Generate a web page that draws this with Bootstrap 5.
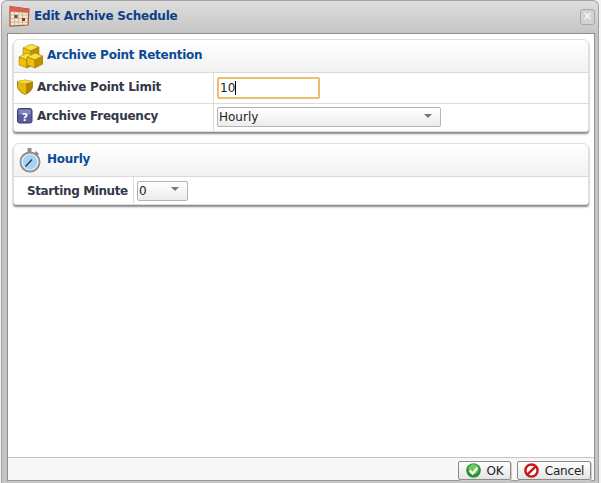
<!DOCTYPE html>
<html lang="en">
<head>
<meta charset="UTF-8">
<title>Edit Archive Schedule</title>
<link rel="stylesheet" href="https://cdn.jsdelivr.net/npm/bootstrap@5.3.0/dist/css/bootstrap.min.css">
<style>
html, body { height: 100%; }
body { background: #f4f4f4; font-family: "DejaVu Sans", Verdana, sans-serif; font-size: 12px; overflow: hidden; }
.dlg { width: 598px; height: 483px; margin-left: 1px; background: linear-gradient(#dedede, #c4c4c4 33px, #c4c4c4); border: 1px solid #a4a4a4; border-bottom: 0; border-radius: 6px 6px 0 0; padding: 0 3px 0 5px; }
.dlg-title { height: 32px; padding-bottom: 1px; gap: 3px; }
.dlg-title span { color: #0b3f86; font-weight: 700; font-size: 12px; letter-spacing: -.2px; padding-bottom: 2px; }
.dlg-title svg { margin-left: 1px; }
.dlg-close { width: 15px; height: 16px; border: 1px solid #a8a8a8; border-radius: 3px; background: #d2d2d2; color: #fff; font-size: 12px; line-height: 13px; text-align: center; }
.dlg-body { height: 448px; width: 588px; background: #fff; border: 1px solid #8e8e8e; border-bottom-color: #9a9a9a; }
.dlg-main { padding: 5px 5px 0 5px; }
.pane { border: 1px solid #dedede; border-radius: 6px 6px 3px 3px; box-shadow: 0 2px 2px 0 #888; margin-bottom: 11px; background: #fff; }
.pane-head { height: 33px; background: linear-gradient(#fff, #f1f1f1); border-bottom: 1px solid #d8d8d8; border-radius: 6px 6px 0 0; padding-left: 4px; color: #0b4a94; font-weight: 700; font-size: 12px; letter-spacing: -.25px; }
.pane-head span { padding-bottom: 3px; }
.pane-row { display: flex; border-bottom: 1px solid #dcdcdc; }
.pane-row:last-child { border-bottom: 0; }
.pane-lab { display: flex; align-items: center; gap: 4px; padding-left: 3px; border-right: 1px solid #dcdcdc; color: #333848; font-weight: 700; font-size: 12px; letter-spacing: -.25px; }
.pane-val { display: flex; align-items: center; padding-left: 3px; }
.row-a { height: 31px; }
.row-a .pane-lab span { padding-bottom: 2px; }
.row-a .pane-lab svg { margin-bottom: 2px; }
.row-b { height: 27px; }
.row-b .pane-lab span { padding-bottom: 3px; }
.row-b .pane-lab svg { margin-bottom: 3px; }
.row-b .pane-val { padding-bottom: 1px; }
.row-c { height: 27px; }
.w-lab1 { width: 200px; }
.w-lab2 { width: 120px; padding-left: 13px; letter-spacing: -.38px; }
.txt-in { width: 103px; height: 22px; border: 2px solid #eebd6c; border-radius: 2px; font-size: 12px; padding-left: 1px; line-height: 18px; color: #222; }
.caret-bar { display: inline-block; width: 1px; height: 14px; background: #000; vertical-align: -3px; }
.sel-in { height: 20px; border: 1px solid #b4b4b4; border-radius: 2px; background: linear-gradient(#fff, #ececec); font-size: 12px; padding: 0 8px 0 1px; color: #222; display: flex; align-items: center; justify-content: space-between; }
.sel-in i { width: 0; height: 0; border: 4px solid transparent; border-top: 4px solid #777; border-bottom: 0; margin-top: -3px; }
.dlg-foot { height: 23px; background: #f7f7f7; border-top: 1px solid #c4c4c4; padding-right: 3px; gap: 6px; }
.dlg-btn { height: 19px; border: 1px solid #8a8a8a; border-radius: 2px; background: linear-gradient(#fff, #e4e4e4); box-shadow: 1px 1px 0 #ccc; font-size: 12px; color: #222; gap: 6px; padding: 0; letter-spacing: -.2px; }
</style>
</head>
<body>
<div class="dlg d-flex flex-column">
  <div class="dlg-title d-flex align-items-center">
    <svg width="23" height="23" viewBox="0 0 23 23">
      <path d="M2 1.500 21 4l-1 16-18 1Z" fill="#efe9cf" stroke="#c2483a" stroke-width="1.200"/>
      <path d="M2 1.500 21 4l-.3 4L2 6.500Z" fill="#d9604e"/>
      <path d="M3 10h17M3 13.500h17M3 17h17M6.500 7v13M10.500 7v13M14.500 7v13" stroke="#aebba0" stroke-width=".8"/>
      <rect x="6.500" y="10" width="3" height="3" fill="#a82a22"/><rect x="14" y="13" width="3" height="3" fill="#a82a22"/>
    </svg>
    <span>Edit Archive Schedule</span>
    <div class="dlg-close ms-auto">×</div>
  </div>
  <div class="dlg-body d-flex flex-column">
    <div class="dlg-main flex-grow-1">
      <div class="pane">
        <div class="pane-head d-flex align-items-center gap-1">
          <svg width="25" height="25" viewBox="0 0 25 25">
            <defs>
              <g id="cube" stroke="#8f7000" stroke-width=".5">
                <path d="M5 4l8-4 8 3-8 4Z" fill="#f9df45"/>
                <path d="M5 4l8 3v8l-8-3Z" fill="#f1bf08"/>
                <path d="M13 7l8-4v8l-8 4Z" fill="#c09200"/>
              </g>
            </defs>
            <use href="#cube" x="0" y="0"/>
            <use href="#cube" x="-4" y="9"/>
            <use href="#cube" x="4" y="9"/>
          </svg>
          <span>Archive Point Retention</span>
        </div>
        <div class="pane-row row-a">
          <div class="pane-lab w-lab1">
            <svg width="16" height="16" viewBox="0 0 16 16"><path d="M.5 2.500Q8-.5 15.500 2.500V8q-1 5-7.500 7.500Q1.500 13 .5 8Z" fill="#e6b80e" stroke="#8a6a00" stroke-width=".7"/><path d="M1 2.500Q8 0 15 2.500 8 5 1 2.500Z" fill="#f9df45"/><path d="M9 4.500V15q5.500-2.500 6.300-7V3Z" fill="#b28600"/></svg>
            <span>Archive Point Limit</span>
          </div>
          <div class="pane-val"><div class="txt-in">10<span class="caret-bar"></span></div></div>
        </div>
        <div class="pane-row row-b">
          <div class="pane-lab w-lab1">
            <svg width="16" height="16" viewBox="0 0 16 16"><rect x=".5" y=".5" width="14.500" height="14.500" rx="2" fill="#5a5a9c" stroke="#3c3c74"/><rect x="1.500" y="1.500" width="12.500" height="5" rx="1" fill="#8484bc"/><text x="7.800" y="12.500" text-anchor="middle" font-size="11" font-weight="700" fill="#fff" font-family="DejaVu Sans">?</text></svg>
            <span>Archive Frequency</span>
          </div>
          <div class="pane-val"><div class="sel-in" style="width:224px">Hourly<i></i></div></div>
        </div>
      </div>
      <div class="pane">
        <div class="pane-head d-flex align-items-center gap-1">
          <svg width="25" height="26" viewBox="0 0 25 26">
            <path d="M9.500 1h4v4h-4Z" fill="#8c8c8c"/><path d="M18 4l3 3-2 1.500-2.500-2.500Z" fill="#8c8c8c"/>
            <circle cx="12" cy="15" r="10.500" fill="#8f8f8f"/>
            <circle cx="12" cy="15" r="8" fill="#a6d2f4" stroke="#eef6fb" stroke-width="1.200"/>
            <path d="M7.500 19.500 14 12.500" stroke="#2c3440" stroke-width="1.300"/>
          </svg>
          <span>Hourly</span>
        </div>
        <div class="pane-row row-c">
          <div class="pane-lab w-lab2"><span>Starting Minute</span></div>
          <div class="pane-val"><div class="sel-in" style="width:51px">0<i></i></div></div>
        </div>
      </div>
    </div>
    <div class="dlg-foot d-flex justify-content-end align-items-end">
      <button type="button" class="dlg-btn d-flex align-items-center justify-content-center" style="width:53px">
        <svg width="15" height="15" viewBox="0 0 16 16"><circle cx="8" cy="8" r="7.800" fill="#2f8f34"/><circle cx="8" cy="6.500" r="5.500" fill="#6fc964"/><path d="M4 8l3 3.300 5-6.300" fill="none" stroke="#fff" stroke-width="2.400"/></svg>OK
      </button>
      <button type="button" class="dlg-btn d-flex align-items-center justify-content-center" style="width:74px">
        <svg width="15" height="15" viewBox="0 0 16 16"><circle cx="8" cy="8" r="6.500" fill="#fff" stroke="#c8171c" stroke-width="2.600"/><path d="M12.500 3.500l-9 9" stroke="#c8171c" stroke-width="2.600"/></svg>Cancel
      </button>
    </div>
  </div>
</div>
</body>
</html>
